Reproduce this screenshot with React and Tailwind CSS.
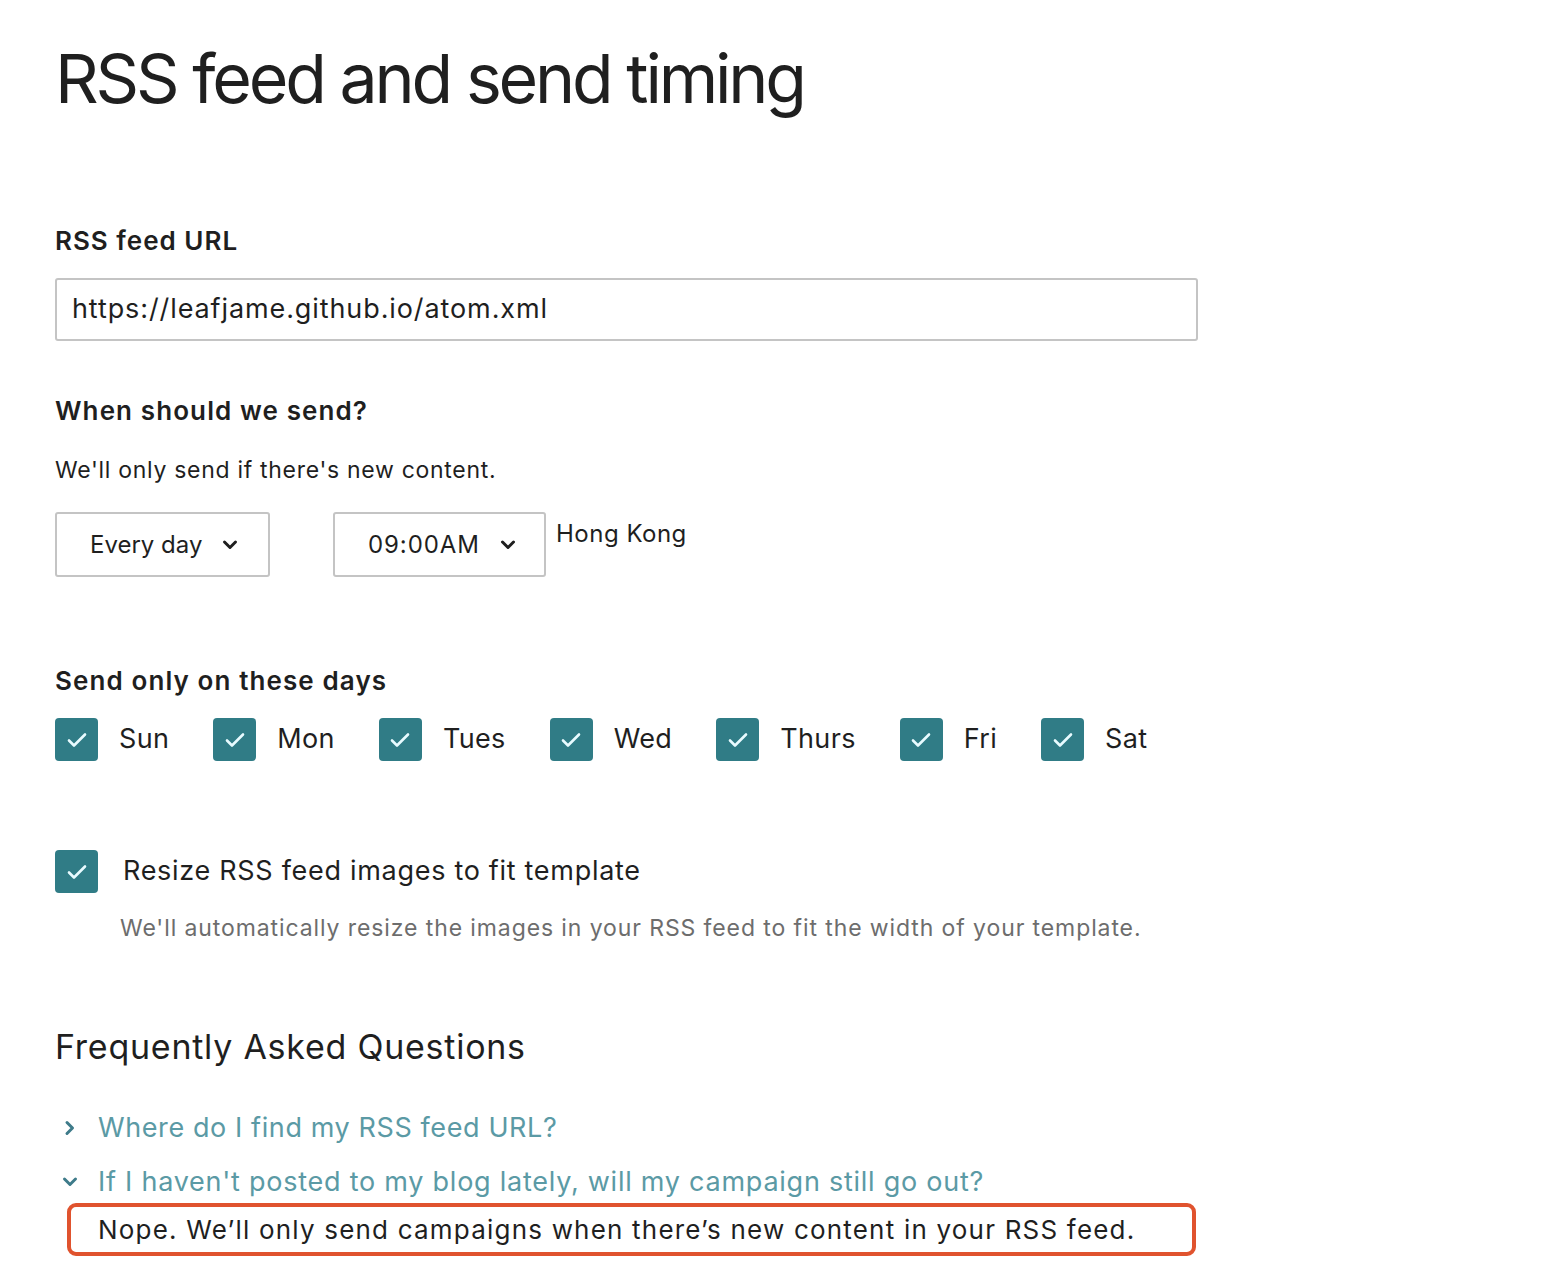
import React from 'react';

const days = ['Sun', 'Mon', 'Tues', 'Wed', 'Thurs', 'Fri', 'Sat'];

function Check() {
  return (
    <div className="w-[43px] h-[43px] rounded-[4px] bg-[#307c86] flex items-center justify-center shrink-0">
      <svg width="20" height="16" viewBox="0 0 20 16" fill="none">
        <path d="M2 8.5l5 5L18 2.5" stroke="#e8fbff" strokeWidth="2.6" strokeLinecap="round" strokeLinejoin="round" />
      </svg>
    </div>
  );
}

function Chevron({ dir = 'down', color = '#1f1f1f' }) {
  return (
    <svg width="16" height="16" viewBox="0 0 16 16" fill="none" className={dir === 'right' ? '-rotate-90' : ''}>
      <path d="M2.5 5L8 10.5 13.5 5" stroke={color} strokeWidth="3" strokeLinecap="round" strokeLinejoin="round" />
    </svg>
  );
}

export default function App() {
  return (
    <div className="min-h-screen bg-white text-[#1f1f1f] font-['Inter',sans-serif] px-[55px] pt-[30px]">
      <h1 className="text-[68px] leading-[96px] font-normal tracking-[-3.2px]">RSS feed and send timing</h1>

      <div className="mt-[95px] text-[26px] leading-[40px] font-semibold tracking-[1px]">RSS feed URL</div>
      <div className="mt-[17px] w-[1143px] h-[63px] border-2 border-[#c4c4c4] rounded-[3px] flex items-center px-[15px] text-[27px] tracking-[0.9px]">
        https://leafjame.github.io/atom.xml
      </div>

      <div className="mt-[50px] text-[26px] leading-[40px] font-semibold tracking-[1.1px]">When should we send?</div>
      <div className="mt-[22px] text-[23px] leading-[34px] tracking-[0.7px]">We'll only send if there's new content.</div>

      <div className="mt-[25px] flex items-start">
        <div className="w-[215px] h-[65px] border-2 border-[#c4c4c4] rounded-[3px] flex items-center pl-[33px] gap-[20px] text-[24px]">
          <span>Every day</span>
          <Chevron />
        </div>
        <div className="ml-[63px] w-[213px] h-[65px] border-2 border-[#c4c4c4] rounded-[3px] flex items-center pl-[33px] gap-[20px] text-[24px] tracking-[0.9px]">
          <span>09:00AM</span>
          <Chevron />
        </div>
        <div className="ml-[10px] text-[24px] leading-[44px] tracking-[0.5px]">Hong Kong</div>
      </div>

      <div className="mt-[84px] text-[26px] leading-[40px] font-semibold tracking-[1.1px]">Send only on these days</div>
      <div className="mt-[17px] flex items-center gap-[44px]">
        {days.map((d) => (
          <div key={d} className="flex items-center gap-[21px]">
            <Check />
            <span className="text-[27px] tracking-[0.35px]">{d}</span>
          </div>
        ))}
      </div>

      <div className="mt-[89px] flex items-center gap-[25px]">
        <Check />
        <span className="text-[27px] tracking-[0.7px]">Resize RSS feed images to fit template</span>
      </div>
      <div className="mt-[18px] ml-[65px] text-[23px] leading-[34px] text-[#6d6d6d] tracking-[0.9px]">
        We'll automatically resize the images in your RSS feed to fit the width of your template.
      </div>

      <h2 className="mt-[77px] text-[34px] leading-[50px] font-normal tracking-[0.75px]">Frequently Asked Questions</h2>

      <div className="mt-[34px] flex items-center gap-[20px] pl-[7px] h-[44px]">
        <Chevron dir="right" color="#3e7b8a" />
        <span className="text-[27px] text-[#5b9aa5] tracking-[0.6px]">Where do I find my RSS feed URL?</span>
      </div>
      <div className="mt-[10px] flex items-center gap-[20px] pl-[7px] h-[44px]">
        <Chevron color="#3e7b8a" />
        <span className="text-[27px] text-[#5b9aa5] tracking-[0.75px]">If I haven't posted to my blog lately, will my campaign still go out?</span>
      </div>
      <div className="-mt-[1px] ml-[12px] w-[1129px] h-[53px] border-4 border-[#e0532e] rounded-[9px] flex items-center pl-[27px] text-[26px] tracking-[1.2px]">
        Nope. We’ll only send campaigns when there’s new content in your RSS feed.
      </div>
    </div>
  );
}
